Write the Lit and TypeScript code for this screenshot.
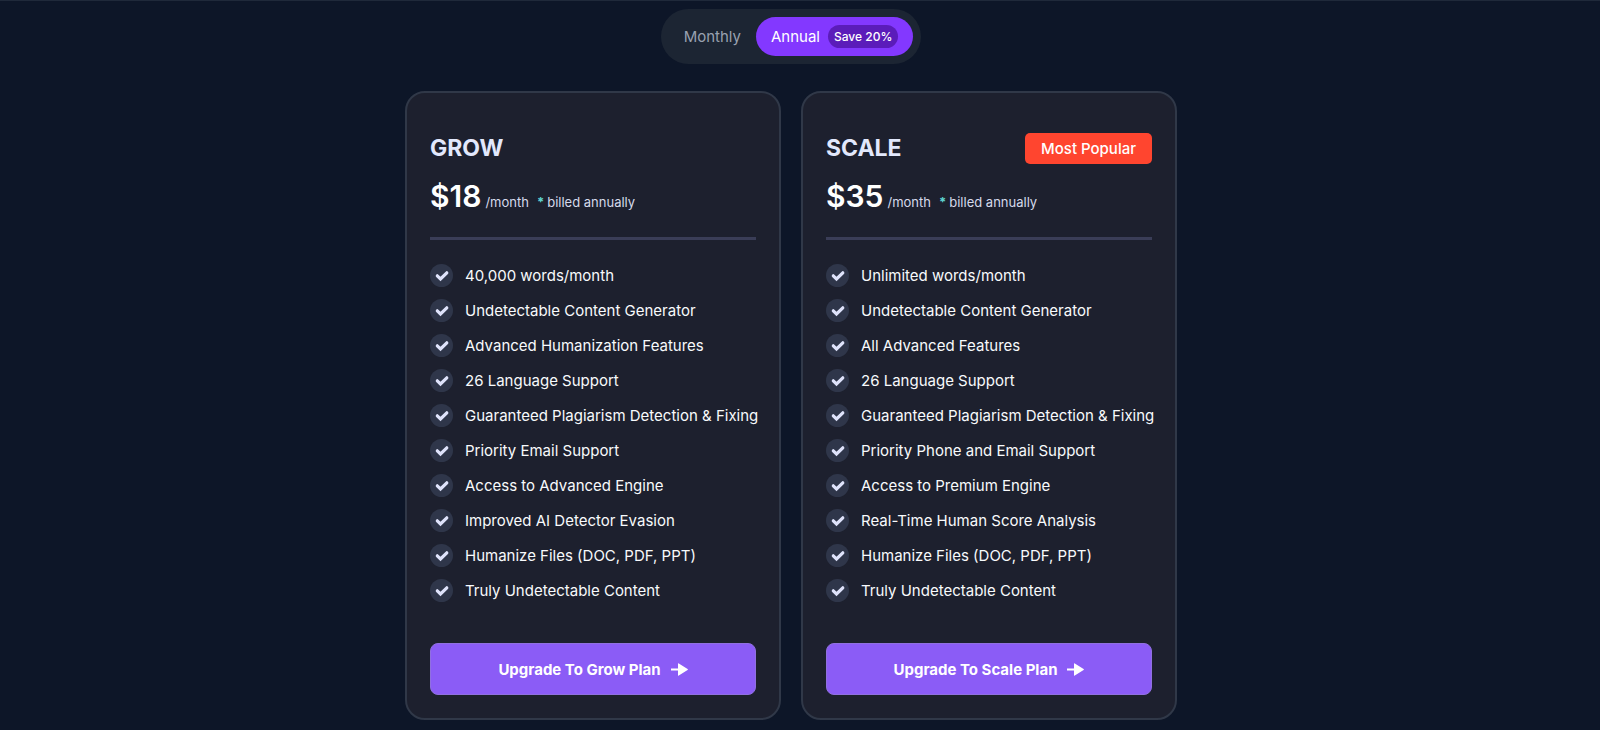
import { LitElement, html, css } from "lit";
import { customElement, property, state } from "lit/decorators.js";

interface Plan {
  name: string;
  title: string;
  annual: string;
  monthly: string;
  popular: boolean;
  features: string[];
}

const plans: Plan[] = [
  {
    name: "Grow",
    title: "GROW",
    annual: "$18",
    monthly: "$23",
    popular: false,
    features: [
      "40,000 words/month",
      "Undetectable Content Generator",
      "Advanced Humanization Features",
      "26 Language Support",
      "Guaranteed Plagiarism Detection & Fixing",
      "Priority Email Support",
      "Access to Advanced Engine",
      "Improved AI Detector Evasion",
      "Humanize Files (DOC, PDF, PPT)",
      "Truly Undetectable Content",
    ],
  },
  {
    name: "Scale",
    title: "SCALE",
    annual: "$35",
    monthly: "$44",
    popular: true,
    features: [
      "Unlimited words/month",
      "Undetectable Content Generator",
      "All Advanced Features",
      "26 Language Support",
      "Guaranteed Plagiarism Detection & Fixing",
      "Priority Phone and Email Support",
      "Access to Premium Engine",
      "Real-Time Human Score Analysis",
      "Humanize Files (DOC, PDF, PPT)",
      "Truly Undetectable Content",
    ],
  },
];

@customElement("plan-card")
export class PlanCard extends LitElement {
  @property({ attribute: false }) plan!: Plan;
  @property({ type: Boolean }) annual = true;

  static styles = css`
    :host {
      display: flex;
      flex-direction: column;
      box-sizing: border-box;
      padding: 39px 23px 23px;
      border: 2px solid #303848;
      border-radius: 20px;
      background: #1d202e;
      color: #f8fafc;
    }
    .head {
      display: flex;
      align-items: center;
      justify-content: space-between;
      min-height: 32px;
    }
    .title {
      margin: 0;
      font-size: 23px;
      line-height: 32px;
      font-weight: 700;
      color: #e2e8fc;
    }
    .badge {
      padding: 4px 16px;
      border-radius: 5px;
      background: #ff452f;
      color: #fff;
      font-size: 15px;
      line-height: 23px;
      font-weight: 500;
    }
    .price {
      display: flex;
      align-items: baseline;
      margin: 12px 0 0;
      font-size: 13px;
      line-height: 40px;
      color: #d5daeb;
    }
    .amount {
      margin-right: 4px;
      font-size: 30px;
      font-weight: 600;
      color: #fff;
    }
    .star {
      margin: 0 3px 0 8px;
      color: #5fd4d0;
      font-weight: 700;
    }
    .rule {
      width: 100%;
      height: 3px;
      margin: 15px 0 24px;
      border: 0;
      background: #3a3d57;
    }
    .features {
      display: grid;
      gap: 12px;
      margin: 0 0 41px;
      padding: 0;
      list-style: none;
      font-size: 15px;
      line-height: 23px;
      white-space: nowrap;
    }
    .feature {
      display: flex;
      gap: 12px;
    }
    .check {
      flex: none;
      width: 23px;
      height: 23px;
    }
    .upgrade {
      display: flex;
      align-items: center;
      justify-content: center;
      gap: 10px;
      height: 52px;
      margin-top: auto;
      border: 1px solid #9070e0;
      border-radius: 8px;
      background: #8b5cf6;
      color: #fff;
      font: inherit;
      font-size: 15px;
      font-weight: 700;
      cursor: pointer;
    }
    .arrow {
      width: 17px;
      height: 13px;
    }
  `;

  render() {
    const p = this.plan;
    return html`
      <div class="head">
        <h2 class="title">${p.title}</h2>
        ${p.popular ? html`<span class="badge">Most Popular</span>` : null}
      </div>
      <p class="price">
        <span class="amount">${this.annual ? p.annual : p.monthly}</span>
        <span>/month</span>
        <span class="star">*</span>
        <span>billed ${this.annual ? "annually" : "monthly"}</span>
      </p>
      <hr class="rule" />
      <ul class="features">
        ${p.features.map(
          (f) => html`<li class="feature">
            <svg class="check" viewBox="0 0 23 23" aria-hidden="true">
              <circle cx="11.5" cy="11.5" r="11.5" fill="#2f364a" />
              <path d="M7.3 11.8 10.5 14.9 16.8 8.8" fill="none" stroke="#dfe3fb" stroke-width="3.2" stroke-linecap="round" />
            </svg>
            <span>${f}</span>
          </li>`
        )}
      </ul>
      <button class="upgrade" type="button">
        <span>Upgrade To ${p.name} Plan</span>
        <svg class="arrow" viewBox="0 0 17 13" aria-hidden="true">
          <path d="M0 5.4H7V0.8Q7 0 7.8 0.4L16.6 6Q17.2 6.5 16.6 7L7.8 12.6Q7 13 7 12.2V7.6H0Z" fill="#fff" />
        </svg>
      </button>
    `;
  }
}

@customElement("app-root")
export class AppRoot extends LitElement {
  @state() annual = true;

  static styles = css`
    :host {
      display: flex;
      flex-direction: column;
      align-items: center;
      box-sizing: border-box;
      min-height: 100vh;
      padding: 8px 18px 9px 0;
      border-top: 1px solid #1f293a;
      background: #0d1628;
      font-family: Inter, "Liberation Sans", sans-serif;
    }
    .toggle {
      display: flex;
      padding: 8px;
      border-radius: 28px;
      background: #1c2533;
    }
    .option {
      display: flex;
      align-items: center;
      gap: 8px;
      height: 39px;
      padding: 0 15px;
      border: 0;
      border-radius: 20px;
      background: none;
      color: #98a1b0;
      font: inherit;
      font-size: 15px;
      cursor: pointer;
    }
    .option[aria-pressed="true"] {
      background: #8338ff;
      color: #fff;
    }
    .save {
      padding: 0 6px;
      border-radius: 12px;
      background: #5b1cba;
      color: #fff;
      font-size: 12px;
      line-height: 23px;
      font-weight: 500;
    }
    .plans {
      display: grid;
      grid-template-columns: repeat(2, minmax(0, 376px));
      justify-content: center;
      gap: 20px;
      width: 100%;
      margin-top: 27px;
    }
  `;

  render() {
    return html`
      <div class="toggle" role="group" aria-label="Billing period">
        <button class="option" type="button" aria-pressed=${!this.annual} @click=${() => (this.annual = false)}>Monthly</button>
        <button class="option" type="button" aria-pressed=${this.annual} @click=${() => (this.annual = true)}>
          Annual <span class="save">Save 20%</span>
        </button>
      </div>
      <div class="plans">
        ${plans.map((p) => html`<plan-card .plan=${p} .annual=${this.annual}></plan-card>`)}
      </div>
    `;
  }
}
